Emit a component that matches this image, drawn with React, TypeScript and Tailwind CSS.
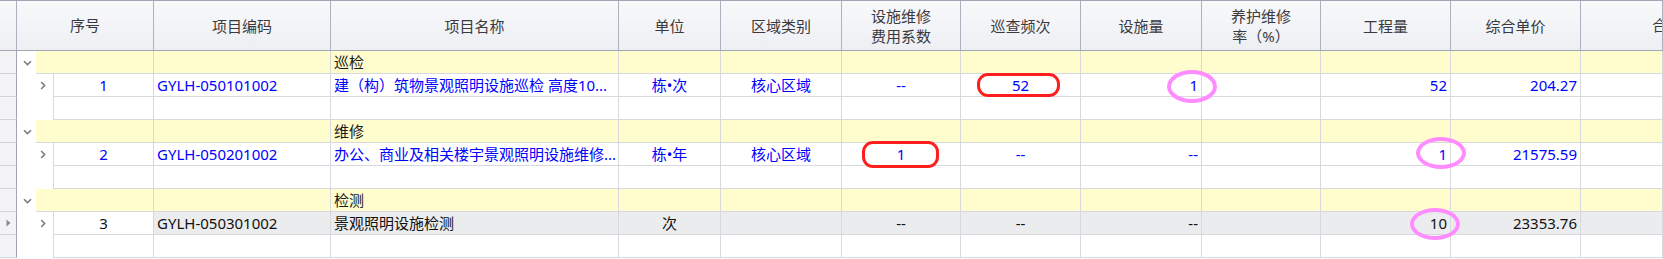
import type { ReactNode } from 'react'

type Alinhar = 'left' | 'center' | 'right'

interface Coluna {
  chave: string
  titulo: string[]
  largura: string
  alinhar: Alinhar
}

type Linha =
  | { tipo: 'grupo'; nome: string }
  | { tipo: 'item'; seq: string; preto?: boolean; atual?: boolean; valores: Record<string, string> }
  | { tipo: 'vazio' }

const colunas: Coluna[] = [
  { chave: 'codigo', titulo: ['项目编码'], largura: 'w-[177px]', alinhar: 'left' },
  { chave: 'nome', titulo: ['项目名称'], largura: 'w-[288px]', alinhar: 'left' },
  { chave: 'unidade', titulo: ['单位'], largura: 'w-[102px]', alinhar: 'center' },
  { chave: 'area', titulo: ['区域类别'], largura: 'w-[121px]', alinhar: 'center' },
  { chave: 'coef', titulo: ['设施维修', '费用系数'], largura: 'w-[119px]', alinhar: 'center' },
  { chave: 'freq', titulo: ['巡查频次'], largura: 'w-[120px]', alinhar: 'center' },
  { chave: 'qtd', titulo: ['设施量'], largura: 'w-[121px]', alinhar: 'right' },
  { chave: 'taxa', titulo: ['养护维修', '率（%）'], largura: 'w-[119px]', alinhar: 'right' },
  { chave: 'obra', titulo: ['工程量'], largura: 'w-[130px]', alinhar: 'right' },
  { chave: 'preco', titulo: ['综合单价'], largura: 'w-[130px]', alinhar: 'right' },
]

const alinhamento: Record<Alinhar, string> = {
  left: 'justify-start pl-[3px]',
  center: 'justify-center',
  right: 'justify-end pr-[3px]',
}

const linhas: Linha[] = [
  { tipo: 'grupo', nome: '巡检' },
  {
    tipo: 'item',
    seq: '1',
    valores: {
      codigo: 'GYLH-050101002',
      nome: '建（构）筑物景观照明设施巡检 高度10...',
      unidade: '栋•次',
      area: '核心区域',
      coef: '--',
      freq: '52',
      qtd: '1',
      obra: '52',
      preco: '204.27',
    },
  },
  { tipo: 'vazio' },
  { tipo: 'grupo', nome: '维修' },
  {
    tipo: 'item',
    seq: '2',
    valores: {
      codigo: 'GYLH-050201002',
      nome: '办公、商业及相关楼宇景观照明设施维修...',
      unidade: '栋•年',
      area: '核心区域',
      coef: '1',
      freq: '--',
      qtd: '--',
      obra: '1',
      preco: '21575.59',
    },
  },
  { tipo: 'vazio' },
  { tipo: 'grupo', nome: '检测' },
  {
    tipo: 'item',
    seq: '3',
    preto: true,
    atual: true,
    valores: {
      codigo: 'GYLH-050301002',
      nome: '景观照明设施检测',
      unidade: '次',
      area: '',
      coef: '--',
      freq: '--',
      qtd: '--',
      obra: '10',
      preco: '23353.76',
    },
  },
  { tipo: 'vazio' },
]

function SetaBaixo() {
  return (
    <svg width="9" height="6" viewBox="0 0 9 6" fill="none">
      <path d="M1 1.2 L4.5 4.6 L8 1.2" stroke="#7c7c80" strokeWidth="1.6" />
    </svg>
  )
}

function SetaDireita() {
  return (
    <svg width="6" height="9" viewBox="0 0 6 9" fill="none">
      <path d="M1.2 1 L4.6 4.5 L1.2 8" stroke="#7c7c80" strokeWidth="1.6" />
    </svg>
  )
}

function Indicador({ atual }: { atual?: boolean }) {
  return (
    <div className="w-[17px] shrink-0 h-full bg-[#f3f3f5] border-r border-r-[#a2a6b4] border-b border-b-[#d3d4da] flex items-center justify-center">
      {atual && (
        <svg width="5" height="8" viewBox="0 0 5 8">
          <path d="M0.5 0.5 L4.5 4 L0.5 7.5 Z" fill="#8a8a90" />
        </svg>
      )}
    </div>
  )
}

function Celula({ largura, classe, children }: { largura: string; classe: string; children?: ReactNode }) {
  return (
    <div className={`${largura} shrink-0 h-full flex items-center overflow-hidden whitespace-nowrap border-r border-b border-[#d8d9de] ${classe}`}>
      {children}
    </div>
  )
}

function LinhaTabela({ linha }: { linha: Linha }) {
  if (linha.tipo === 'grupo') {
    return (
      <div className="flex h-[23px]">
        <Indicador />
        <div className="w-[137px] shrink-0 h-full flex">
          <div className="w-[19px] h-full flex items-center justify-center pl-[1px]">
            <SetaBaixo />
          </div>
          <div className="flex-1 h-full bg-[#fffdcd] border-r border-b border-[#d8d9de]" />
        </div>
        {colunas.map(col => (
          <Celula key={col.chave} largura={col.largura} classe={`bg-[#fffdcd] ${alinhamento[col.alinhar]}`}>
            {col.chave === 'nome' ? <span className="text-[#1a1a1a]">{linha.nome}</span> : null}
          </Celula>
        ))}
        <Celula largura="flex-1" classe="bg-[#fffdcd]" />
      </div>
    )
  }

  if (linha.tipo === 'vazio') {
    return (
      <div className="flex h-[23px]">
        <Indicador />
        <div className="w-[137px] shrink-0 h-full flex">
          <div className="w-[36px] h-full" />
          <div className="flex-1 h-full border-l border-r border-b border-[#d8d9de]" />
        </div>
        {colunas.map(col => (
          <Celula key={col.chave} largura={col.largura} classe="" />
        ))}
        <Celula largura="flex-1" classe="" />
      </div>
    )
  }

  const cor = linha.preto ? 'text-[#111111]' : 'text-[#0000ff]'
  const fundo = linha.atual ? 'bg-[#ebecee]' : ''
  return (
    <div className="flex h-[23px]">
      <Indicador atual={linha.atual} />
      <div className="w-[137px] shrink-0 h-full flex">
        <div className="w-[36px] h-full flex items-center justify-end pr-[7px]">
          <SetaDireita />
        </div>
        <div className={`flex-1 h-full flex items-center justify-center border-l border-r border-b border-[#d8d9de] ${cor}`}>
          {linha.seq}
        </div>
      </div>
      {colunas.map(col => (
        <Celula key={col.chave} largura={col.largura} classe={`${fundo} ${cor} ${alinhamento[col.alinhar]}`}>
          {linha.valores[col.chave] ?? ''}
        </Celula>
      ))}
      <Celula largura="flex-1" classe={fundo} />
    </div>
  )
}

export default function App() {
  return (
    <div className="relative w-[1663px] h-[259px] bg-white overflow-hidden text-[15px] [font-family:'Noto_Sans','Noto_Sans_CJK_SC',sans-serif]">
      {/* cabeçalho */}
      <div className="flex h-[51px] border-t border-b border-[#a3a7b4] bg-linear-to-b from-[#f8f9fb] to-[#edeff3] text-[#3a3a3e]">
        <div className="w-[17px] shrink-0 border-r border-[#aeb2bf]" />
        <div className="w-[137px] shrink-0 flex items-center justify-center border-r border-[#aeb2bf]">序号</div>
        {colunas.map(col => (
          <div
            key={col.chave}
            className={`${col.largura} shrink-0 flex flex-col items-center justify-center leading-[20px] border-r border-[#aeb2bf]`}
          >
            {col.titulo.map(t => (
              <span key={t}>{t}</span>
            ))}
          </div>
        ))}
        <div className="flex-1 overflow-hidden border-r border-[#aeb2bf]">
          <div className="w-[172px] h-full flex items-center justify-center">合价</div>
        </div>
      </div>

      {linhas.map((linha, i) => (
        <LinhaTabela key={i} linha={linha} />
      ))}

      {/* marcações */}
      <div className="absolute left-[977px] top-[73px] w-[83px] h-[24px] border-[3px] border-[#ff1e1e] rounded-[11px]" />
      <div className="absolute left-[862px] top-[141px] w-[77px] h-[27px] border-[3px] border-[#ff1e1e] rounded-[11px]" />
      <div className="absolute left-[1167px] top-[70px] w-[50px] h-[33px] border-[4px] border-[#ff8cff] rounded-[50%]" />
      <div className="absolute left-[1416px] top-[137px] w-[50px] h-[32px] border-[4px] border-[#ff8cff] rounded-[50%]" />
      <div className="absolute left-[1410px] top-[208px] w-[50px] h-[32px] border-[4px] border-[#ff8cff] rounded-[50%]" />
    </div>
  )
}
